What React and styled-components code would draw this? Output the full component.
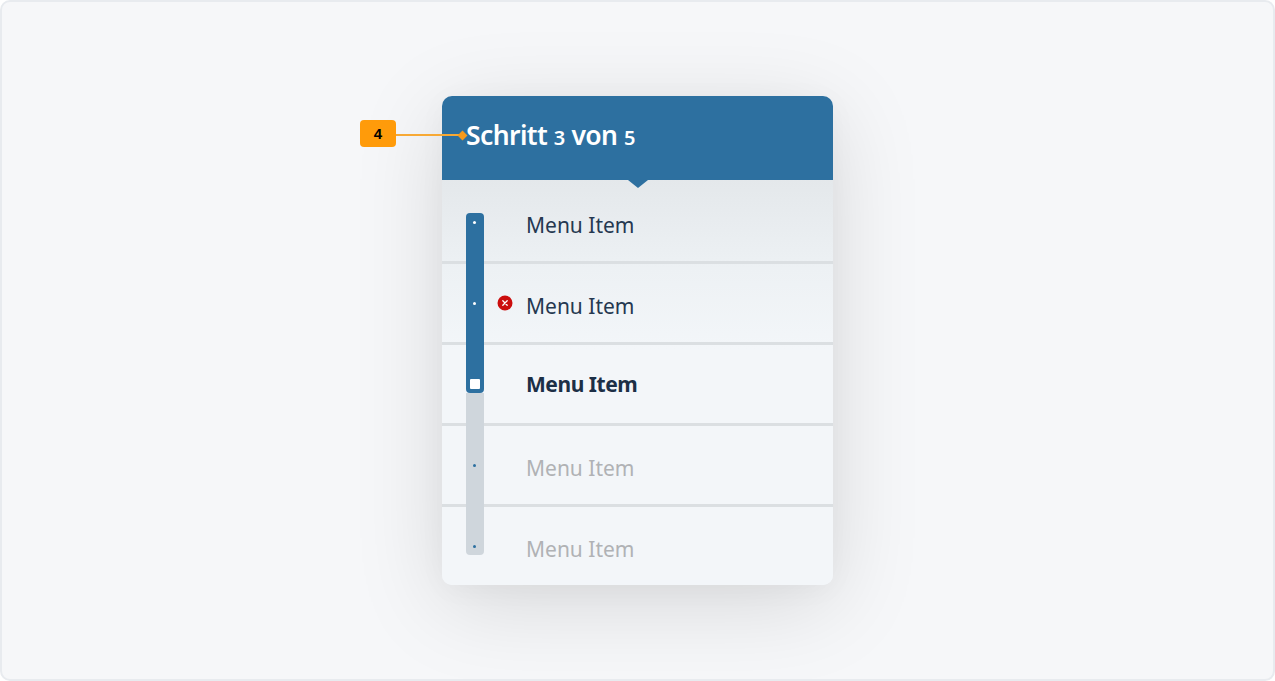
import React from "react";
import styled, { createGlobalStyle } from "styled-components";

const Global = createGlobalStyle`
  html, body { margin: 0; padding: 0; height: 100%; background: #ffffff; }
  #root { height: 100%; }
`;

const Stage = styled.div`
  box-sizing: border-box;
  width: 1275px;
  height: 681px;
  border: 2px solid #e8ebef;
  border-radius: 10px;
  background: #f6f7f9;
  display: flex;
  justify-content: center;
  padding: 94px 0 0 0;
  font-family: "Noto Sans", sans-serif;
  overflow: hidden;
`;

const Card = styled.section`
  position: relative;
  width: 391px;
  height: 489px;
  border-radius: 10px;
  background: #f3f6f9;
  box-shadow: 0 18px 90px rgba(0, 0, 0, 0.13), 0 4px 30px rgba(0, 0, 0, 0.03);
  display: flex;
  flex-direction: column;
`;

const Header = styled.header`
  position: relative;
  height: 84px;
  flex: none;
  box-sizing: border-box;
  background: #2d70a0;
  border-radius: 10px 10px 0 0;
  padding: 22px 0 0 24px;
  color: #ffffff;
  font-weight: 600;
  font-size: 26.5px;
  letter-spacing: -0.6px;
  word-spacing: 0.4px;
  line-height: 34px;
  white-space: nowrap;
  &::after {
    content: "";
    position: absolute;
    left: 186px;
    bottom: -8px;
    width: 0;
    height: 0;
    border-left: 10px solid transparent;
    border-right: 10px solid transparent;
    border-top: 8px solid #2d70a0;
  }
`;

const Count = styled.span`
  font-size: 20px;
  letter-spacing: -0.5px;
`;

const List = styled.ul`
  list-style: none;
  margin: 0;
  padding: 3px 0 0;
  flex: 1;
  display: flex;
  flex-direction: column;
  border-radius: 0 0 10px 10px;
  background: linear-gradient(180deg, #e4e8eb 0%, #edf1f4 22%, #f3f6f9 42%);
`;

const Row = styled.li`
  box-sizing: border-box;
  height: ${(p) => (p.$last ? 78 : 81)}px;
  flex: none;
  padding: ${(p) => p.$top}px 0 0 84px;
  border-bottom: ${(p) => (p.$last ? "none" : "3px solid #dbdfe2")};
  position: relative;
  font-size: 21px;
  line-height: 30px;
  font-weight: ${(p) => (p.$active ? 700 : 400)};
  letter-spacing: ${(p) => (p.$active ? "-0.45px" : "0")};
  color: ${(p) => (p.$muted ? "#b0b2b5" : p.$active ? "#1c2f46" : "#253850")};
`;

const ErrorBadge = styled.svg`
  position: absolute;
  left: 55px;
  top: 31px;
  width: 16px;
  height: 16px;
`;

const Rail = styled.div`
  position: absolute;
  left: 24px;
  top: 117px;
  width: 18px;
  height: 342px;
  display: flex;
  flex-direction: column;
`;

const Done = styled.div`
  box-sizing: border-box;
  height: 180px;
  padding-top: 8px;
  flex: none;
  background: #2d70a0;
  border-radius: 4px;
  display: flex;
  flex-direction: column;
  align-items: center;
  position: relative;
  z-index: 1;
`;

const Rest = styled.div`
  flex: 1;
  box-sizing: border-box;
  padding-top: 71px;
  background: #cfd6dc;
  border-radius: 0 0 4px 4px;
  display: flex;
  flex-direction: column;
  align-items: center;
`;

const Dot = styled.i`
  display: block;
  flex: none;
  width: 3px;
  height: 3px;
  margin-right: 1px;
  border-radius: 50%;
  background: ${(p) => p.$color};
  & + & { margin-top: 78px; }
`;

const Current = styled.i`
  display: block;
  flex: none;
  width: 10px;
  height: 10px;
  margin-top: 74px;
  border-radius: 1px;
  background: #ffffff;
`;

const Tag = styled.div`
  position: absolute;
  left: -82px;
  top: 24px;
  width: 36px;
  height: 27px;
  border-radius: 4px;
  background: #ff9b0a;
  color: #000000;
  font-family: "Liberation Sans", sans-serif;
  font-weight: 700;
  font-size: 15px;
  display: flex;
  align-items: center;
  justify-content: center;
`;

const Leader = styled.div`
  position: absolute;
  left: -46px;
  top: 38px;
  width: 67px;
  height: 2px;
  background: #f7a935;
  &::after {
    content: "";
    position: absolute;
    right: -3px;
    top: -2.5px;
    width: 7px;
    height: 7px;
    transform: rotate(45deg);
    background: #f59a1b;
  }
`;

const rows = [
  { top: 27 },
  { top: 27, error: true },
  { top: 24, active: true },
  { top: 27, muted: true },
  { top: 27, muted: true, last: true },
];

export default function App() {
  return (
    <>
      <Global />
      <Stage>
        <Card>
          <Header>
            Schritt <Count>3</Count> von <Count>5</Count>
          </Header>
          <List>
            {rows.map((r, i) => (
              <Row key={i} $top={r.top} $active={r.active} $muted={r.muted} $last={r.last}>
                {r.error && (
                  <ErrorBadge viewBox="0 0 16 16">
                    <circle cx="8" cy="8" r="7.5" fill="#cb0d0d" />
                    <path d="M5.8 5.8l4.4 4.4M10.2 5.8l-4.4 4.4" stroke="#fff" strokeWidth="1.3" strokeLinecap="round" />
                  </ErrorBadge>
                )}
                Menu Item
              </Row>
            ))}
          </List>
          <Rail>
            <Done>
              <Dot $color="#ffffff" />
              <Dot $color="#ffffff" />
              <Current />
            </Done>
            <Rest>
              <Dot $color="#2d70a0" />
              <Dot $color="#2d70a0" />
            </Rest>
          </Rail>
          <Tag>4</Tag>
          <Leader />
        </Card>
      </Stage>
    </>
  );
}
